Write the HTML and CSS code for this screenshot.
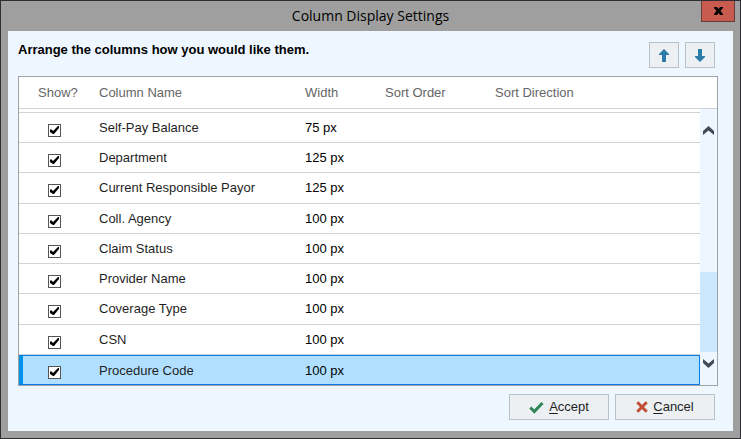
FILE: index.html
```html
<!DOCTYPE html>
<html lang="en">
<head>
<meta charset="utf-8">
<title>Column Display Settings</title>
<link rel="stylesheet" href="styles.css">
</head>
<body>
<div class="dialog" role="dialog" aria-labelledby="dialog-title">
  <header class="titlebar">
    <h1 class="title" id="dialog-title">Column Display Settings</h1>
    <button class="close" type="button" aria-label="Close"><svg width="9" height="8" viewBox="0 0 9 8"><path d="M0 0h3l1.500 2L6 0h3v1L6.500 4 9 7v1H6L4.500 6 3 8H0V7l2.500-3L0 1z"/></svg></button>
  </header>
  <main class="content">
    <div class="toolbar">
      <p class="intro">Arrange the columns how you would like them.</p>
      <div class="movers">
        <button class="button mover" type="button" aria-label="Move up"><svg width="10" height="13" viewBox="0 0 10 13"><path d="M5 0l5 5v1H7v7H3V6H0V5z"/></svg></button>
        <button class="button mover" type="button" aria-label="Move down"><svg width="10" height="13" viewBox="0 0 10 13"><path d="M5 13l5-5V7H7V0H3v7H0v1z"/></svg></button>
      </div>
    </div>
    <div class="list">
      <table class="columns">
        <colgroup><col class="c-show"><col class="c-name"><col class="c-width"><col class="c-order"><col><col class="c-scroll"></colgroup>
        <thead><tr><th class="show">Show?</th><th>Column Name</th><th>Width</th><th>Sort Order</th><th>Sort Direction</th><th></th></tr></thead>
        <tbody>
          <tr class="partial"><td></td><td></td><td></td><td></td><td></td></tr>
          <tr><td class="show"><input type="checkbox" aria-labelledby="n1" checked></td><td id="n1">Self-Pay Balance</td><td class="width">75 px</td><td></td><td></td></tr>
          <tr><td class="show"><input type="checkbox" aria-labelledby="n2" checked></td><td id="n2">Department</td><td class="width">125 px</td><td></td><td></td></tr>
          <tr><td class="show"><input type="checkbox" aria-labelledby="n3" checked></td><td id="n3">Current Responsible Payor</td><td class="width">125 px</td><td></td><td></td></tr>
          <tr><td class="show"><input type="checkbox" aria-labelledby="n4" checked></td><td id="n4">Coll. Agency</td><td class="width">100 px</td><td></td><td></td></tr>
          <tr><td class="show"><input type="checkbox" aria-labelledby="n5" checked></td><td id="n5">Claim Status</td><td class="width">100 px</td><td></td><td></td></tr>
          <tr><td class="show"><input type="checkbox" aria-labelledby="n6" checked></td><td id="n6">Provider Name</td><td class="width">100 px</td><td></td><td></td></tr>
          <tr><td class="show"><input type="checkbox" aria-labelledby="n7" checked></td><td id="n7">Coverage Type</td><td class="width">100 px</td><td></td><td></td></tr>
          <tr><td class="show"><input type="checkbox" aria-labelledby="n8" checked></td><td id="n8">CSN</td><td class="width">100 px</td><td></td><td></td></tr>
          <tr class="selected"><td class="show"><input type="checkbox" aria-labelledby="n9" checked></td><td id="n9">Procedure Code</td><td class="width">100 px</td><td></td><td></td></tr>
        </tbody>
      </table>
      <div class="scrollbar">
        <button class="scroll-button" type="button" aria-label="Scroll up"><svg width="11" height="9" viewBox="0 0 11 9"><path d="M0 5L5.500 0 11 5v4L5.500 4.500 0 9z"/></svg></button>
        <div class="thumb"></div>
        <button class="scroll-button" type="button" aria-label="Scroll down"><svg width="11" height="9" viewBox="0 0 11 9"><path d="M0 4L5.500 9 11 4V0L5.500 4.500 0 0z"/></svg></button>
      </div>
    </div>
    <footer class="actions">
      <button class="button action" type="button"><svg class="accept" width="15" height="13" viewBox="0 0 15 13"><path d="M1.300 6.500L5.300 10.500 13.500 2"/></svg><span><u>A</u>ccept</span></button>
      <button class="button action" type="button"><svg class="cancel" width="12" height="12" viewBox="0 0 12 12"><path d="M1.300 1.300l9.400 9.400M10.700 1.300l-9.400 9.400"/></svg><span><u>C</u>ancel</span></button>
    </footer>
  </main>
</div>
</body>
</html>
```
FILE: styles.css
```css
* { box-sizing: border-box; }

body {
  margin: 0;
  font: 13px/16px "Liberation Sans", Arial, sans-serif;
  color: #1f1f1f;
}

button { font: inherit; color: inherit; padding: 0; }
svg { display: block; }

.dialog {
  display: flex;
  flex-direction: column;
  min-height: 100vh;
  padding: 0 7px 7px;
  border: 1px solid #302d33;
  background: #9f9f9f;
}

.titlebar {
  position: relative;
  height: 30px;
}

.title {
  margin: 0;
  font: 14px/30px "Open Sans", "Segoe UI", sans-serif;
  text-align: center;
  color: #000;
}

.close {
  position: absolute;
  top: 0;
  right: -2px;
  display: grid;
  place-items: center;
  width: 34px;
  height: 21px;
  border: 1px solid #633d3a;
  border-top: 0;
  background: #c75b50;
}

.content {
  flex: 1;
  padding: 11px 15px 11px 10px;
  background: #eef6ff;
}

.toolbar {
  display: flex;
  justify-content: space-between;
  height: 34px;
}

.intro {
  margin: 0;
  font-weight: bold;
  color: #000;
}

.movers { display: flex; gap: 6px; padding-right: 3px; }

.button {
  display: flex;
  align-items: center;
  justify-content: center;
  height: 26px;
  border: 1px solid #bbc2c7;
  background: #ecf0f3;
}

.mover { width: 30px; fill: #2b7ca8; }

.list {
  position: relative;
  border: 1px solid #9fa3a8;
  background: #fff;
}

.columns {
  width: 100%;
  table-layout: fixed;
  border-collapse: separate;
  border-spacing: 0;
}

.c-show { width: 80px; }
.c-name { width: 206px; }
.c-width { width: 80px; }
.c-order { width: 110px; }
.c-scroll { width: 17px; }

th, td { padding: 0; text-align: left; border-bottom: 1px solid #cdd3d6; }
th { height: 32px; font-weight: normal; color: #666; }
.show { padding-left: 19px; }
td { height: 30px; padding-top: 7px; vertical-align: top; }
td.show { padding: 11px 0 0 29px; }
.width { color: #000; }
tr:nth-child(4n) td { height: 31px; }
.partial td { height: 4px; padding: 0; }

.selected td {
  background: #b0dfff;
  border-top: 1px solid #0a7be8;
  border-bottom: 1px solid #0a7be8;
}
.selected td.show { padding-top: 10px; box-shadow: inset 4px 0 #0091ea; }
.selected td:last-child { border-right: 1px solid #0a7be8; }

input {
  appearance: none;
  display: block;
  width: 13px;
  height: 13px;
  margin: 0;
  border: 1px solid #555;
  background: #fff;
}

input:checked::before {
  content: "";
  display: block;
  width: 11px;
  height: 11px;
  background: #000;
  clip-path: polygon(1px 5px, 2px 4px, 4px 6px, 9px 1px, 10px 1px, 10px 3px, 5px 9px, 4px 9px, 1px 7px);
}

.scrollbar {
  position: absolute;
  top: 32px;
  right: 0;
  bottom: 0;
  display: flex;
  flex-direction: column;
  width: 17px;
  background: #eef6ff;
}

.scroll-button {
  display: grid;
  place-items: center;
  height: 43px;
  border: 0;
  background: none;
  fill: #414c57;
}
.scroll-button:last-child { height: 33px; padding-bottom: 11px; }

.thumb { height: 80px; margin-top: auto; background: #cce8ff; }

.actions {
  display: flex;
  justify-content: flex-end;
  gap: 6px;
  padding: 8px 3px 0 0;
}

.action { gap: 5px; width: 100px; }
.accept { fill: none; stroke: #2f8558; stroke-width: 3; }
.cancel { fill: none; stroke: #c24e35; stroke-width: 3; }
u { text-underline-offset: 2px; }
```
